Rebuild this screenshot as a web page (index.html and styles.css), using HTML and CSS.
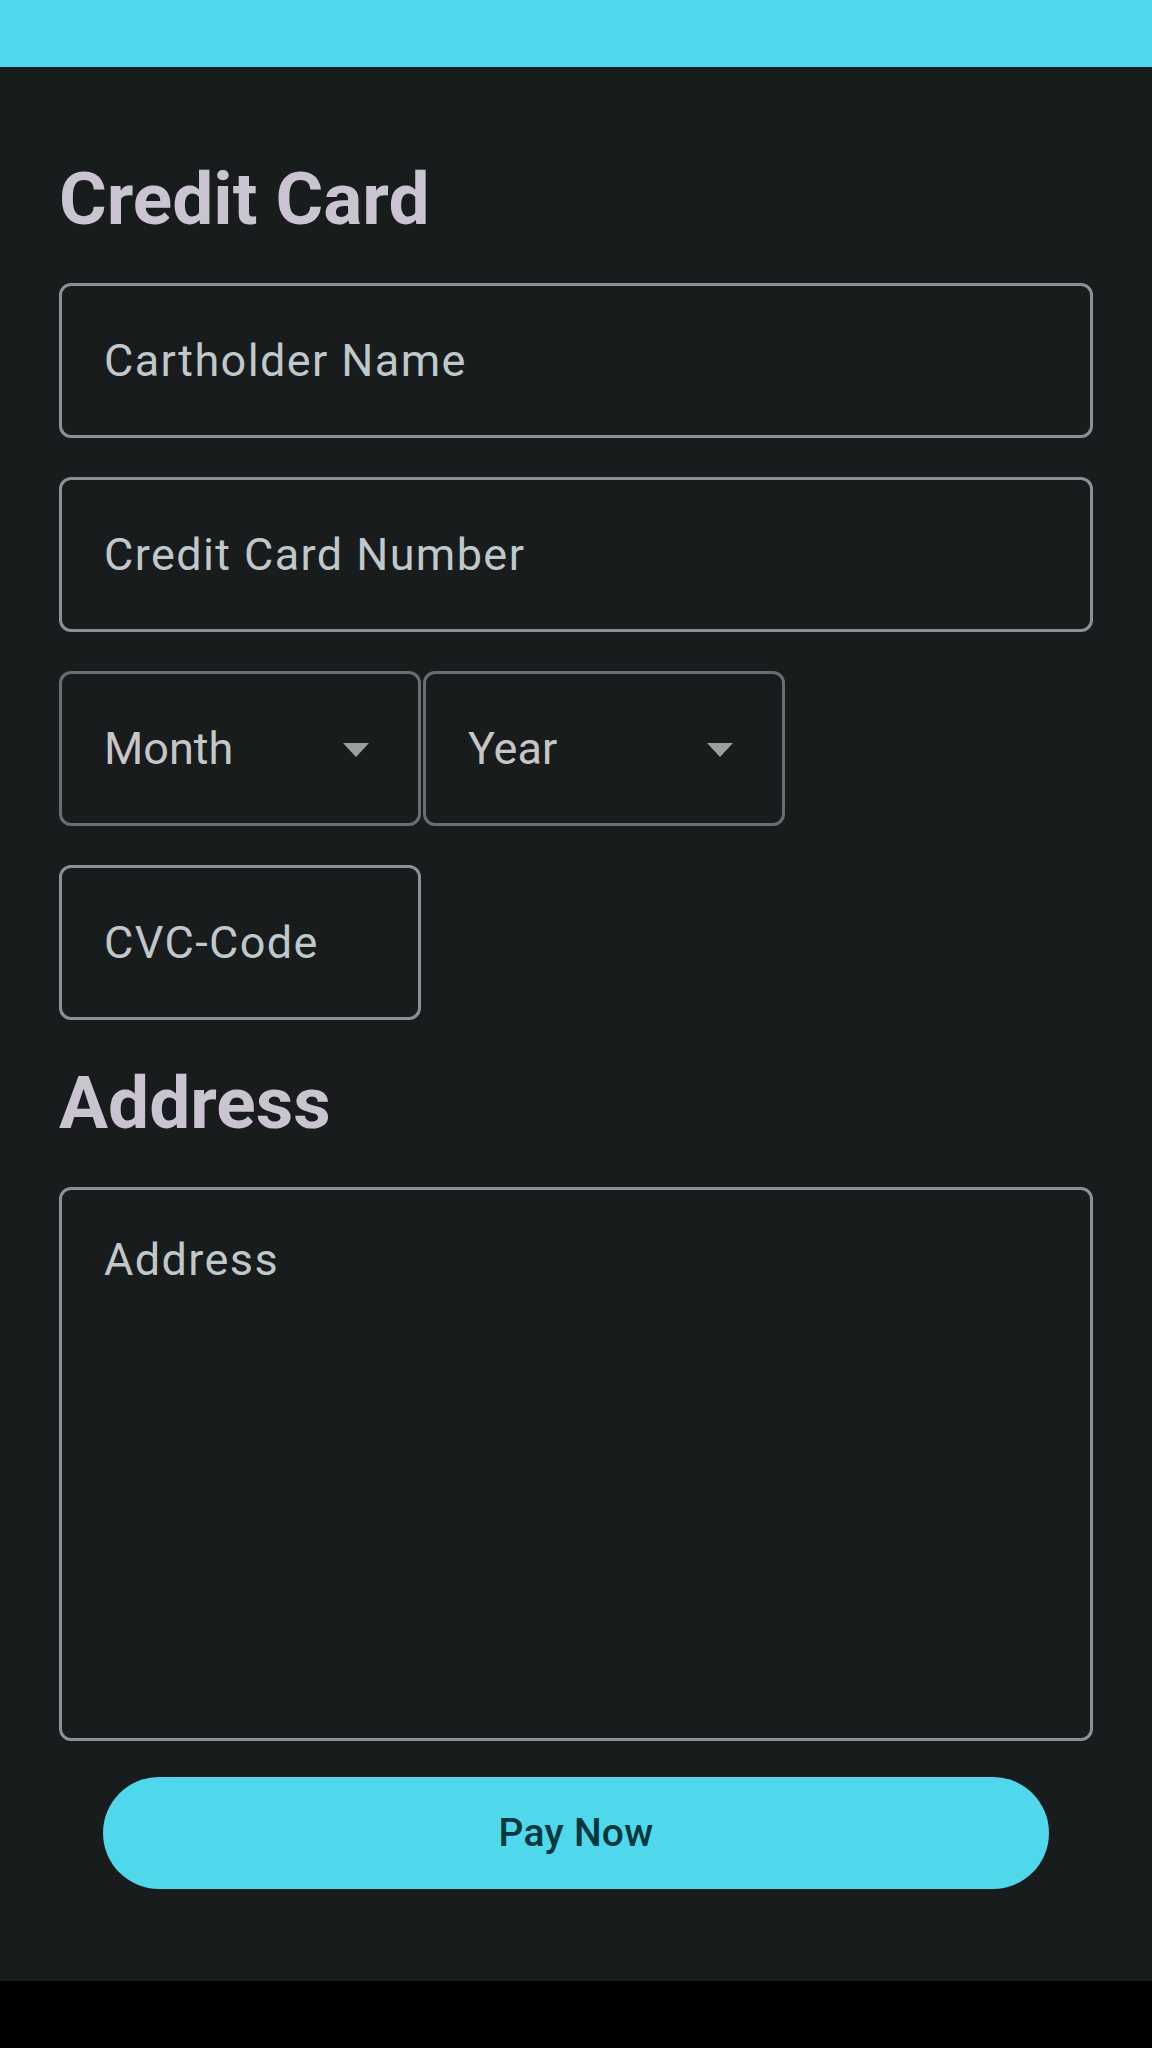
FILE: index.html
```html
<!DOCTYPE html>
<html lang="en">
<head>
<meta charset="utf-8">
<title>Payment</title>
<link rel="stylesheet" href="styles.css">
</head>
<body>
<div class="screen">
  <div class="status-bar"></div>
  <main class="content">
    <div class="form">
      <h1 class="heading">Credit Card</h1>
      <div class="field"><span class="label">Cartholder Name</span></div>
      <div class="field"><span class="label">Credit Card Number</span></div>
      <div class="row">
        <div class="select"><span class="select-text">Month</span><span class="arrow"></span></div>
        <div class="select"><span class="select-text">Year</span><span class="arrow"></span></div>
      </div>
      <div class="field field-small"><span class="label">CVC-Code</span></div>
      <h1 class="heading">Address</h1>
      <div class="field field-area"><span class="label">Address</span></div>
    </div>
    <div class="actions">
      <button class="pay-button">Pay Now</button>
    </div>
  </main>
</div>
</body>
</html>
```
FILE: styles.css
```css
html, body {
  margin: 0;
  padding: 0;
}
body {
  background: #000000;
  font-family: Roboto, "Noto Sans", "Liberation Sans", sans-serif;
}
.screen {
  background: #191c1d;
}
.status-bar {
  height: 67px;
  background: #4fd8eb;
}
.content {
  padding: 88px 59px 92px 59px;
}
.form {
  display: flex;
  flex-direction: column;
  gap: 39px;
}
.heading {
  margin: 0;
  font-size: 73px;
  line-height: 89px;
  font-weight: 700;
  color: #cac4d0;
}
.field {
  box-sizing: border-box;
  height: 155px;
  border: 3px solid #899194;
  border-radius: 12px;
  padding: 0 42px;
  display: flex;
  align-items: center;
}
.label {
  font-size: 45px;
  line-height: 45px;
  letter-spacing: 1.4px;
  color: #bfc8ca;
}
.field-small {
  width: 362px;
}
.field-area {
  height: 554px;
  align-items: flex-start;
  padding-top: 47px;
}
.row {
  display: flex;
  gap: 2px;
}
.select {
  box-sizing: border-box;
  width: 362px;
  height: 155px;
  border: 3px solid #6b6e70;
  border-radius: 12px;
  padding: 0 49px 0 42px;
  display: flex;
  align-items: center;
  justify-content: space-between;
}
.select-text {
  font-size: 45px;
  line-height: 45px;
  color: #c6c6c6;
}
.arrow {
  width: 0;
  height: 0;
  border-left: 13px solid transparent;
  border-right: 13px solid transparent;
  border-top: 14px solid #9e9e9e;
  margin-top: 2px;
}
.actions {
  margin-top: 36px;
}
.pay-button {
  display: block;
  width: 946px;
  height: 112px;
  margin: 0 0 0 44px;
  border: none;
  border-radius: 56px;
  background: #4fd8eb;
  color: #00363d;
  font-family: Roboto, "Noto Sans", "Liberation Sans", sans-serif;
  font-size: 39px;
  font-weight: 500;
  letter-spacing: 0.3px;
  padding: 0;
}
```
